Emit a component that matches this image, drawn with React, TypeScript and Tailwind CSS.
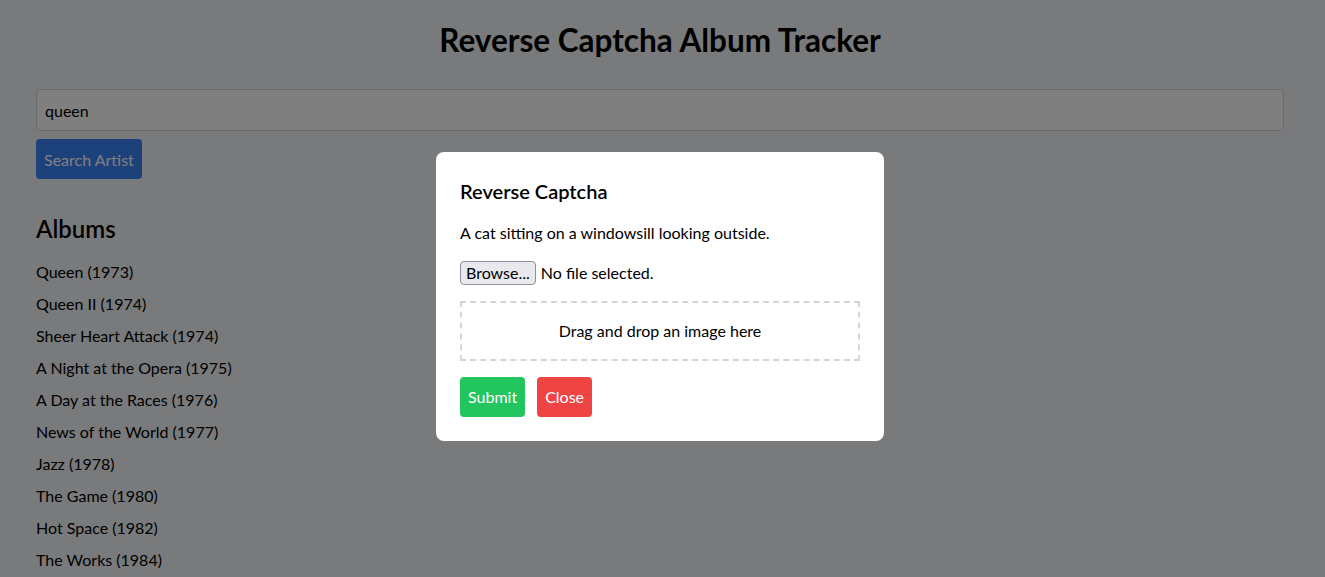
import React from "react";

const albums = [
  "Queen (1973)",
  "Queen II (1974)",
  "Sheer Heart Attack (1974)",
  "A Night at the Opera (1975)",
  "A Day at the Races (1976)",
  "News of the World (1977)",
  "Jazz (1978)",
  "The Game (1980)",
  "Hot Space (1982)",
  "The Works (1984)",
];

export default function App() {
  return (
    <div
      className="relative h-[577px] w-[1325px] overflow-hidden bg-gray-100 text-black"
      style={{ fontFamily: '"Segoe UI", Lato, "Noto Sans", sans-serif' }}
    >
      <div className="w-[1320px]">
        <div className="mx-auto max-w-[1280px] px-4 pt-[22px]">
          <h1 className="text-center text-[31.5px] font-bold leading-9">Reverse Captcha Album Tracker</h1>
          <input
            readOnly
            value="queen"
            className="mt-[31px] block h-[42px] w-full rounded border border-gray-300 bg-white p-2 text-base outline-none"
          />
          <button className="mt-2 rounded bg-[#3b82f6] px-2 pb-[7px] pt-[9px] text-base leading-6 text-white">
            Search Artist
          </button>
          <h2 className="mt-[34px] text-2xl font-semibold leading-8">Albums</h2>
          <ul className="mt-[15px] flex flex-col gap-2">
            {albums.map((a) => (
              <li key={a} className="text-base leading-6">
                {a}
              </li>
            ))}
          </ul>
        </div>
      </div>

      <div className="absolute inset-0 bg-black/50">
        <div className="flex w-[1320px] justify-center pt-[152px]">
          <div className="w-[448px] rounded-lg bg-white p-6">
            <h3 className="mb-4 pt-px text-xl font-semibold leading-7">Reverse Captcha</h3>
            <p className="mb-4 text-base leading-6">A cat sitting on a windowsill looking outside.</p>
            <div className="mb-4 flex h-[24px] items-center text-base">
              <span className="flex h-[24px] items-center rounded border border-[#8f8f9d] bg-[#e9e9ed] px-[5px] text-[16px] leading-none text-black">
                Browse...
              </span>
              <span className="ml-[5px]">No file selected.</span>
            </div>
            <div className="border-2 border-dashed border-gray-300 p-4 text-center text-base leading-6">
              Drag and drop an image here
            </div>
            <div className="mt-4 flex gap-3">
              <button className="rounded bg-[#22c55e] px-2 py-2 text-base leading-6 text-white">Submit</button>
              <button className="rounded bg-[#ef4444] px-2 py-2 text-base leading-6 text-white">Close</button>
            </div>
          </div>
        </div>
      </div>
    </div>
  );
}
